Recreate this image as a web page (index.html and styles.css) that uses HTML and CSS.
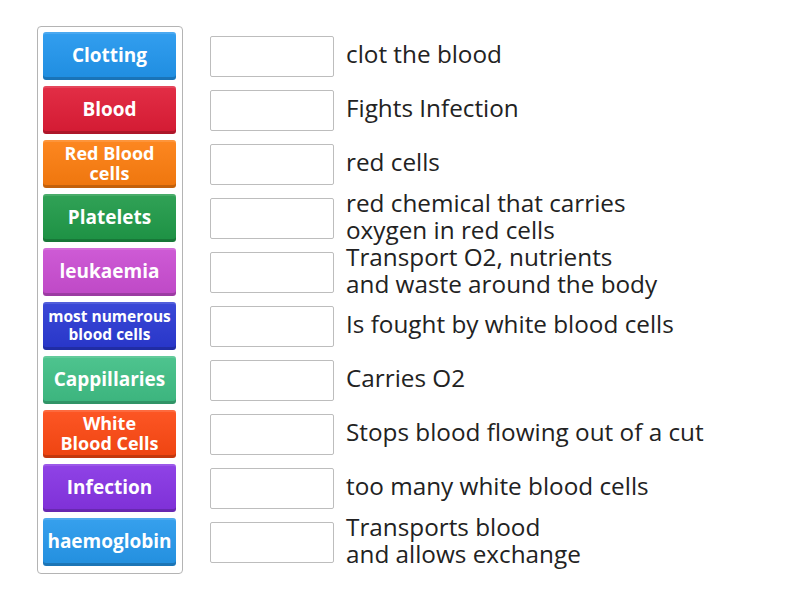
FILE: index.html
```html
<!DOCTYPE html>
<html>
<head>
<meta charset="utf-8">
<link rel="stylesheet" href="styles.css">
</head>
<body>
<div class="page">
  <div class="panel">
    <div class="tile c-blue">Clotting</div>
    <div class="tile c-red">Blood</div>
    <div class="tile c-orange two">Red Blood<br>cells</div>
    <div class="tile c-green">Platelets</div>
    <div class="tile c-magenta">leukaemia</div>
    <div class="tile c-indigo small">most numerous<br>blood cells</div>
    <div class="tile c-mint">Cappillaries</div>
    <div class="tile c-redorange two">White<br>Blood Cells</div>
    <div class="tile c-purple">Infection</div>
    <div class="tile c-sky">haemoglobin</div>
  </div>
  <div class="answers">
    <div class="row"><div class="slot"></div><div class="label">clot the blood</div></div>
    <div class="row"><div class="slot"></div><div class="label">Fights Infection</div></div>
    <div class="row"><div class="slot"></div><div class="label">red cells</div></div>
    <div class="row"><div class="slot"></div><div class="label">red chemical that carries<br>oxygen in red cells</div></div>
    <div class="row"><div class="slot"></div><div class="label">Transport O2, nutrients<br>and waste around the body</div></div>
    <div class="row"><div class="slot"></div><div class="label">Is fought by white blood cells</div></div>
    <div class="row"><div class="slot"></div><div class="label">Carries O2</div></div>
    <div class="row"><div class="slot"></div><div class="label">Stops blood flowing out of a cut</div></div>
    <div class="row"><div class="slot"></div><div class="label">too many white blood cells</div></div>
    <div class="row"><div class="slot"></div><div class="label">Transports blood<br>and allows exchange</div></div>
  </div>
</div>
</body>
</html>
```

FILE: styles.css
```css
html, body {
  margin: 0;
  padding: 0;
  background: #fff;
}
body {
  font-family: "Open Sans", "Liberation Sans", sans-serif;
  color: #222;
}
.page {
  display: flex;
  align-items: flex-start;
  padding: 26px 0 0 37px;
}
.panel {
  display: flex;
  flex-direction: column;
  gap: 6px;
  width: 146px;
  box-sizing: border-box;
  border: 1px solid #b4b4b4;
  border-radius: 4px;
  padding: 5px 6px 7px 5px;
}
.tile {
  height: 48px;
  box-sizing: border-box;
  border-radius: 3px;
  display: flex;
  align-items: center;
  justify-content: center;
  text-align: center;
  color: #fff;
  font-weight: 700;
  font-size: 19px;
  line-height: 21px;
  padding-bottom: 2px;
  box-shadow: inset 0 -3px 0 rgba(0,0,0,0.18), inset 0 2px 0 rgba(255,255,255,0.12);
  background-image: linear-gradient(to bottom, rgba(255,255,255,0.08), rgba(0,0,0,0.06));
}
.tile.two {
  font-size: 18px;
  line-height: 20px;
}
.tile.small {
  font-size: 15.5px;
  line-height: 18px;
}
.c-blue { background-color: #2196ee; }
.c-red { background-color: #e01c36; }
.c-orange { background-color: #fd7d0e; }
.c-green { background-color: #1f9a48; }
.c-magenta { background-color: #ca4dd2; }
.c-indigo { background-color: #2a39d4; }
.c-mint { background-color: #3fbf85; }
.c-redorange { background-color: #fd4812; }
.c-purple { background-color: #8633e4; }
.c-sky { background-color: #2598ec; }

.answers {
  display: flex;
  flex-direction: column;
  gap: 6px;
  margin-left: 27px;
  padding-top: 6px;
}
.row {
  height: 48px;
  display: flex;
  align-items: center;
}
.slot {
  width: 124px;
  height: 41px;
  box-sizing: border-box;
  border: 1px solid #bdbdbd;
  border-radius: 2px;
  background: #fff;
  flex: none;
}
.label {
  margin-left: 12px;
  margin-bottom: 5px;
  font-size: 24.3px;
  line-height: 27px;
  color: #222;
  white-space: nowrap;
}
```
